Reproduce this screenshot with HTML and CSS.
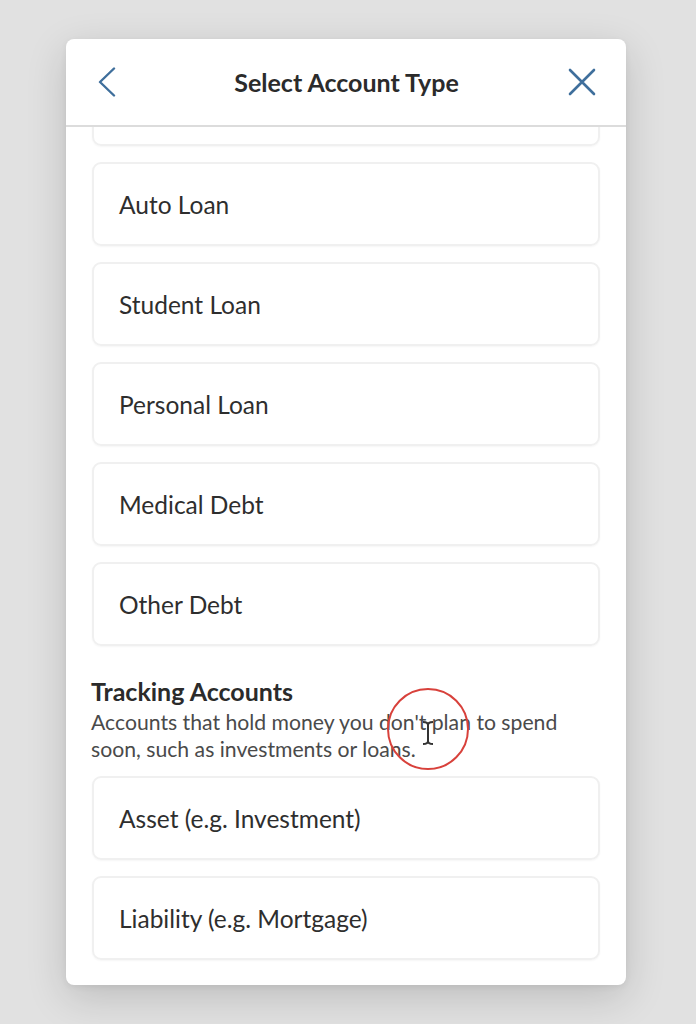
FILE: index.html
```html
<!DOCTYPE html>
<html lang="en">
<head>
<meta charset="utf-8">
<title>Select Account Type</title>
<link rel="stylesheet" href="styles.css">
</head>
<body>
<div class="modal">
  <header class="modal-header">
    <button class="icon-btn back" aria-label="Back">
      <svg width="20" height="30" viewBox="0 0 20 30"><path d="M17 1.5 L3 15 L17 28.5" fill="none" stroke="#3f6f9c" stroke-width="2.4" stroke-linecap="round" stroke-linejoin="round"/></svg>
    </button>
    <h1 class="modal-title">Select Account Type</h1>
    <button class="icon-btn close" aria-label="Close">
      <svg width="28" height="28" viewBox="0 0 28 28"><path d="M2 2 L26 26 M26 2 L2 26" fill="none" stroke="#3f6f9c" stroke-width="2.6" stroke-linecap="round"/></svg>
    </button>
  </header>
  <div class="modal-body">
    <div class="list">
      <div class="option" aria-hidden="true"></div>
      <div class="option">Auto Loan</div>
      <div class="option">Student Loan</div>
      <div class="option">Personal Loan</div>
      <div class="option">Medical Debt</div>
      <div class="option">Other Debt</div>
      <section class="group">
        <h2 class="group-title">Tracking Accounts</h2>
        <p class="group-desc">Accounts that hold money you don't plan to spend soon, such as investments or loans.</p>
      </section>
      <div class="option">Asset (e.g. Investment)</div>
      <div class="option">Liability (e.g. Mortgage)</div>
    </div>
  </div>
</div>
<div class="click-ring">
  <svg width="14" height="26" viewBox="0 0 14 26"><path d="M2 2 Q7 2 7 5 Q7 2 12 2 M7 5 L7 21 M2 24 Q7 24 7 21 Q7 24 12 24" fill="none" stroke="#333" stroke-width="2"/></svg>
</div>
</body>
</html>
```

FILE: styles.css
```css
* { box-sizing: border-box; }
html, body { margin: 0; padding: 0; }
body {
  width: 696px;
  height: 1024px;
  background: #e1e1e1;
  font-family: "Lato", "Open Sans", sans-serif;
  color: #2e2e2e;
  padding: 39px 70px 0 66px;
  position: relative;
  overflow: hidden;
}
.modal {
  width: 560px;
  height: 946px;
  background: #fff;
  border-radius: 8px;
  box-shadow: 0 12px 40px rgba(0,0,0,0.16), 0 2px 6px rgba(0,0,0,0.06);
  overflow: hidden;
  display: flex;
  flex-direction: column;
}
.modal-header {
  height: 88px;
  flex: none;
  display: flex;
  align-items: center;
  justify-content: space-between;
  padding: 0 28px 0 25px;
  border-bottom: 2px solid #dcdcdc;
}
.icon-btn {
  background: none;
  border: 0;
  padding: 0;
  width: 32px;
  height: 32px;
  display: flex;
  align-items: center;
  justify-content: center;
}
.modal-title {
  margin: 0 0 0 4px;
  font-size: 25px;
  font-weight: 700;
  color: #2b2b2b;
}
.modal-body {
  flex: 1;
  overflow: hidden;
}
.list {
  margin-top: -65px;
  padding: 0 26px;
  display: flex;
  flex-direction: column;
  gap: 16px;
}
.option {
  height: 84px;
  flex: none;
  border: 2px solid #f0f0f0;
  border-radius: 9px;
  box-shadow: 0 1px 2px rgba(0,0,0,0.04);
  display: flex;
  align-items: center;
  padding-left: 25px;
  font-size: 24.5px;
  color: #2e2e2e;
}
.group {
  padding-top: 14px;
  margin-left: -1px;
  margin-bottom: -3px;
}
.group-title {
  margin: 0;
  font-size: 25px;
  font-weight: 700;
  line-height: 30px;
  color: #2b2b2b;
}
.group-desc {
  margin: 3px 0 0;
  font-size: 21.2px;
  line-height: 27px;
  color: #4a4a4a;
}
.click-ring {
  position: absolute;
  left: 387px;
  top: 688px;
  width: 82px;
  height: 82px;
  border: 2.5px solid #d8413b;
  border-radius: 50%;
  display: flex;
  align-items: center;
  justify-content: center;
  padding-top: 8px;
}
```
